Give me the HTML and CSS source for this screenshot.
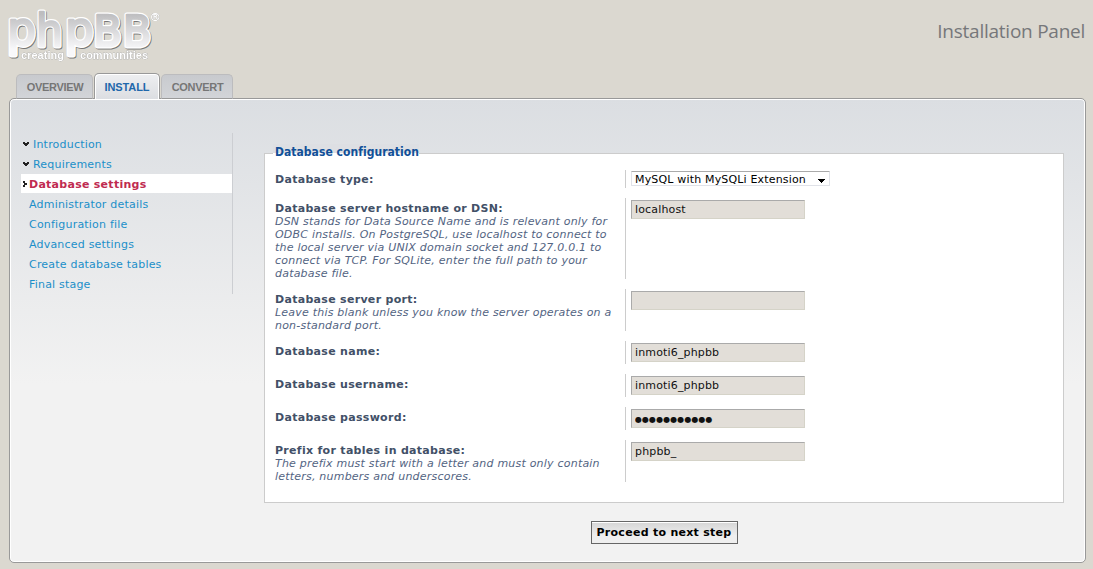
FILE: index.html
```html
<!DOCTYPE html>
<html lang="en">
<head>
<meta charset="utf-8">
<title>Installation Panel</title>
<link rel="stylesheet" href="styles.css">
</head>
<body>
<header class="page-header">
  <svg class="logo" width="165" height="66" viewBox="0 0 165 66" role="img" aria-label="phpBB creating communities">
    <defs>
      <linearGradient id="metal" gradientUnits="userSpaceOnUse" x1="0" y1="-32" x2="0" y2="4">
        <stop offset="0" stop-color="#bdbdbf"/><stop offset="1" stop-color="#f8f8fa"/>
      </linearGradient>
      <g id="word">
        <text transform="translate(7 45) scale(.97 1)" font-size="47">p</text>
        <text transform="translate(36 46) scale(.94 1)" font-size="45">h</text>
        <text transform="translate(65 45) scale(.97 1)" font-size="47">p</text>
        <text transform="translate(93.2 45.5) scale(.97 1)" font-size="43">B</text>
        <text transform="translate(122.7 45.5) scale(.97 1)" font-size="43">B</text>
      </g>
    </defs>
    <use href="#word" class="logo-shadow" x=".8" y="1.3"/>
    <use href="#word" class="logo-edge"/>
    <use href="#word" class="logo-face"/>
    <g class="tagline">
      <text x="21" y="59" textLength="43">creating</text>
      <text x="80" y="59" textLength="68">communities</text>
    </g>
    <text x="149.8" y="20.5" class="reg">®</text>
  </svg>
  <h1 class="page-title">Installation Panel</h1>
</header>
<nav class="tabs">
  <a class="tab tab-overview">OVERVIEW</a>
  <a class="tab tab-active">INSTALL</a>
  <a class="tab tab-convert">CONVERT</a>
</nav>
<main class="panel">
  <ul class="menu">
    <li class="menu-item done"><svg class="mark" width="6" height="4" shape-rendering="crispEdges"><path d="M0 0h2v1h2V0h2v2H5v1H4v1H2V3H1V2H0z"/></svg>Introduction</li>
    <li class="menu-item done"><svg class="mark" width="6" height="4" shape-rendering="crispEdges"><path d="M0 0h2v1h2V0h2v2H5v1H4v1H2V3H1V2H0z"/></svg>Requirements</li>
    <li class="menu-item current"><svg class="arrow" width="4" height="6" shape-rendering="crispEdges"><path d="M0 0h2v2h2v2H2v2H0V4h1V2H0z"/></svg>Database settings</li>
    <li class="menu-item">Administrator details</li>
    <li class="menu-item">Configuration file</li>
    <li class="menu-item">Advanced settings</li>
    <li class="menu-item">Create database tables</li>
    <li class="menu-item">Final stage</li>
  </ul>
  <form class="content">
    <section class="fieldset">
      <h2 class="legend">Database configuration</h2>
      <div class="row row-select">
        <div class="label"><b>Database type:</b></div>
        <div class="field"><div class="select"><span>MySQL with MySQLi Extension</span><svg class="caret" width="7" height="4" shape-rendering="crispEdges"><path d="M0 0h7v1H6v1H5v1H4v1H3V3H2V2H1V1H0z"/></svg></div></div>
      </div>
      <div class="row">
        <div class="label"><b>Database server hostname or DSN:</b><i>DSN stands for Data Source Name and is relevant only for<br>ODBC installs. On PostgreSQL, use localhost to connect to<br>the local server via UNIX domain socket and 127.0.0.1 to<br>connect via TCP. For SQLite, enter the full path to your<br>database file.</i></div>
        <div class="field"><input class="input" type="text" value="localhost"></div>
      </div>
      <div class="row">
        <div class="label"><b>Database server port:</b><i>Leave this blank unless you know the server operates on a<br>non-standard port.</i></div>
        <div class="field"><input class="input" type="text"></div>
      </div>
      <div class="row">
        <div class="label"><b>Database name:</b></div>
        <div class="field"><input class="input" type="text" value="inmoti6_phpbb"></div>
      </div>
      <div class="row">
        <div class="label"><b>Database username:</b></div>
        <div class="field"><input class="input" type="text" value="inmoti6_phpbb"></div>
      </div>
      <div class="row">
        <div class="label"><b>Database password:</b></div>
        <div class="field"><input class="input password" type="text" value="●●●●●●●●●●●"></div>
      </div>
      <div class="row">
        <div class="label"><b>Prefix for tables in database:</b><i>The prefix must start with a letter and must only contain<br>letters, numbers and underscores.</i></div>
        <div class="field"><input class="input" type="text" value="phpbb_"></div>
      </div>
    </section>
    <button class="submit" type="button">Proceed to next step</button>
  </form>
</main>
</body>
</html>
```
FILE: styles.css
```css
* { box-sizing: border-box; }
body {
  margin: 0;
  height: 569px;
  overflow: hidden;
  background: #dbd8d0;
  font: 11px/13px Verdana, "DejaVu Sans", sans-serif;
  color: #425067;
}
.page-header { display: flex; justify-content: space-between; height: 73px; padding-right: 8px; }
.logo { font-family: "DejaVu Sans", sans-serif; }
.logo-shadow { fill: #777; stroke: #777; stroke-width: 5; stroke-linejoin: round; }
.logo-edge { fill: #fff; stroke: #fff; stroke-width: 5; stroke-linejoin: round; }
.logo-face { fill: url(#metal); stroke: url(#metal); stroke-width: 2.4; stroke-linejoin: round; }
.tagline { font: bold 11px "Liberation Sans", sans-serif; fill: #fff; stroke: #fff; stroke-width: .3; filter: drop-shadow(.7px .9px .2px #555); }
.reg { font: 11px "DejaVu Sans", sans-serif; fill: #fff; stroke: #fff; stroke-width: .4; filter: drop-shadow(.6px .8px .2px #777); }
.page-title { margin: 19px 0 0; font: 19px/24px "Trebuchet MS", "Open Sans", sans-serif; letter-spacing: -.25px; color: #76777a; white-space: nowrap; }

.tabs { display: flex; align-items: flex-end; height: 26px; padding-left: 16px; gap: 1px; margin-bottom: -1px; position: relative; z-index: 1; }
.tab {
  height: 25px;
  border: 1px solid #bcbcbe;
  border-bottom-color: #999;
  border-radius: 5px 5px 0 0;
  background: linear-gradient(#c8cace, #d2d4d8);
  font: bold 11px/25px "Liberation Sans", Arial, sans-serif;
  letter-spacing: -.3px;
  color: #767676;
  text-align: center;
}
.tab-overview { width: 77px; padding-left: 1px; }
.tab-active {
  width: 66px;
  height: 26px;
  border: 1px solid #999;
  border-bottom: 0;
  box-shadow: inset 1px 1px #fff, inset -1px 0 #fff;
  background: linear-gradient(#eeeff1, #dcdee2);
  color: #1f68ab;
  line-height: 26px;
  letter-spacing: -.1px;
}
.tab-convert { width: 72px; padding-left: 1px; }

.panel {
  display: flex;
  align-items: flex-start;
  width: 1077px;
  height: 465px;
  margin-left: 9px;
  padding: 34px 21px 0 11px;
  border: 1px solid #999;
  border-radius: 5px;
  box-shadow: inset 0 0 0 1px #fff;
  background: linear-gradient(#dbdee2, #f2f2f2 285px);
}
.menu { width: 212px; height: 161px; margin: 0; padding: 1px 0 0; border-right: 1px solid #ccced2; list-style: none; letter-spacing: .2px; }
.menu-item { display: flex; align-items: center; height: 20px; padding-left: 8px; color: #1b8fc9; white-space: nowrap; }
.done { padding-left: 2px; gap: 4px; }
.mark, .arrow { fill: #222; flex: none; }
.current { height: 19px; margin-bottom: 1px; padding: 1px 0 0 2px; gap: 2px; background: #fff; color: #bf2b50; font-weight: bold; letter-spacing: .27px; }

.content { display: flex; flex-direction: column; align-items: center; margin: 20px 0 0 31px; width: 800px; }
.fieldset { position: relative; display: flex; flex-direction: column; gap: 10px; width: 800px; height: 350px; padding: 16px 10px 0; border: 1px solid #ccc; background: #fff; }
.legend { position: absolute; top: -10px; left: 8px; margin: 0; padding: 0 0 0 2px; font: bold 12px/16px Tahoma, "DejaVu Sans Condensed", sans-serif; letter-spacing: .04px; color: #115098; background: linear-gradient(#dddfe3 9px, #fff 9px); white-space: nowrap; }
.row { display: grid; grid-template-columns: 350px 1fr; min-height: 23px; }
.row-select { min-height: 18px; height: 18px; }
.label { padding-top: 4px; margin-bottom: -1px; white-space: nowrap; }
.row-select .label { padding-top: 3px; }
.label b, .label i { display: block; }
.label b { letter-spacing: .3px; }
.label i { color: #536482; letter-spacing: .21px; }
.field { padding: 2px 0 0 5px; border-left: 1px solid #ccc; }
.row-select .field { padding-top: 1px; }
.input { display: block; width: 174px; height: 19px; margin: 0; padding: 0 0 0 3px; border: 1px solid; border-color: #aaa #d5d3c8 #d5d3c8 #aaa; border-radius: 0; background: #e2ded8; color: #111; font: 11px/17px Verdana, "DejaVu Sans", sans-serif; letter-spacing: .15px; }
.password { padding-top: 1px; font-size: 8px; letter-spacing: .08px; }
.select { display: flex; justify-content: space-between; align-items: center; width: 199px; height: 15px; padding: 1px 4px 0 3px; border: 1px solid #e0e2e8; border-top-color: #aaa; border-radius: 1px; background: #fff; color: #000; letter-spacing: .17px; white-space: nowrap; }
.caret { margin-top: 3px; }
.submit { width: 147px; height: 23px; margin-top: 18px; padding: 1px 0 0; border: 1px solid #666; border-radius: 0; box-shadow: inset 0 1px #fff; background: linear-gradient(#d5d5d5, #efefef 65%); font: bold 11px/20px Verdana, "DejaVu Sans", sans-serif; letter-spacing: .28px; color: #000; white-space: nowrap; }
```
